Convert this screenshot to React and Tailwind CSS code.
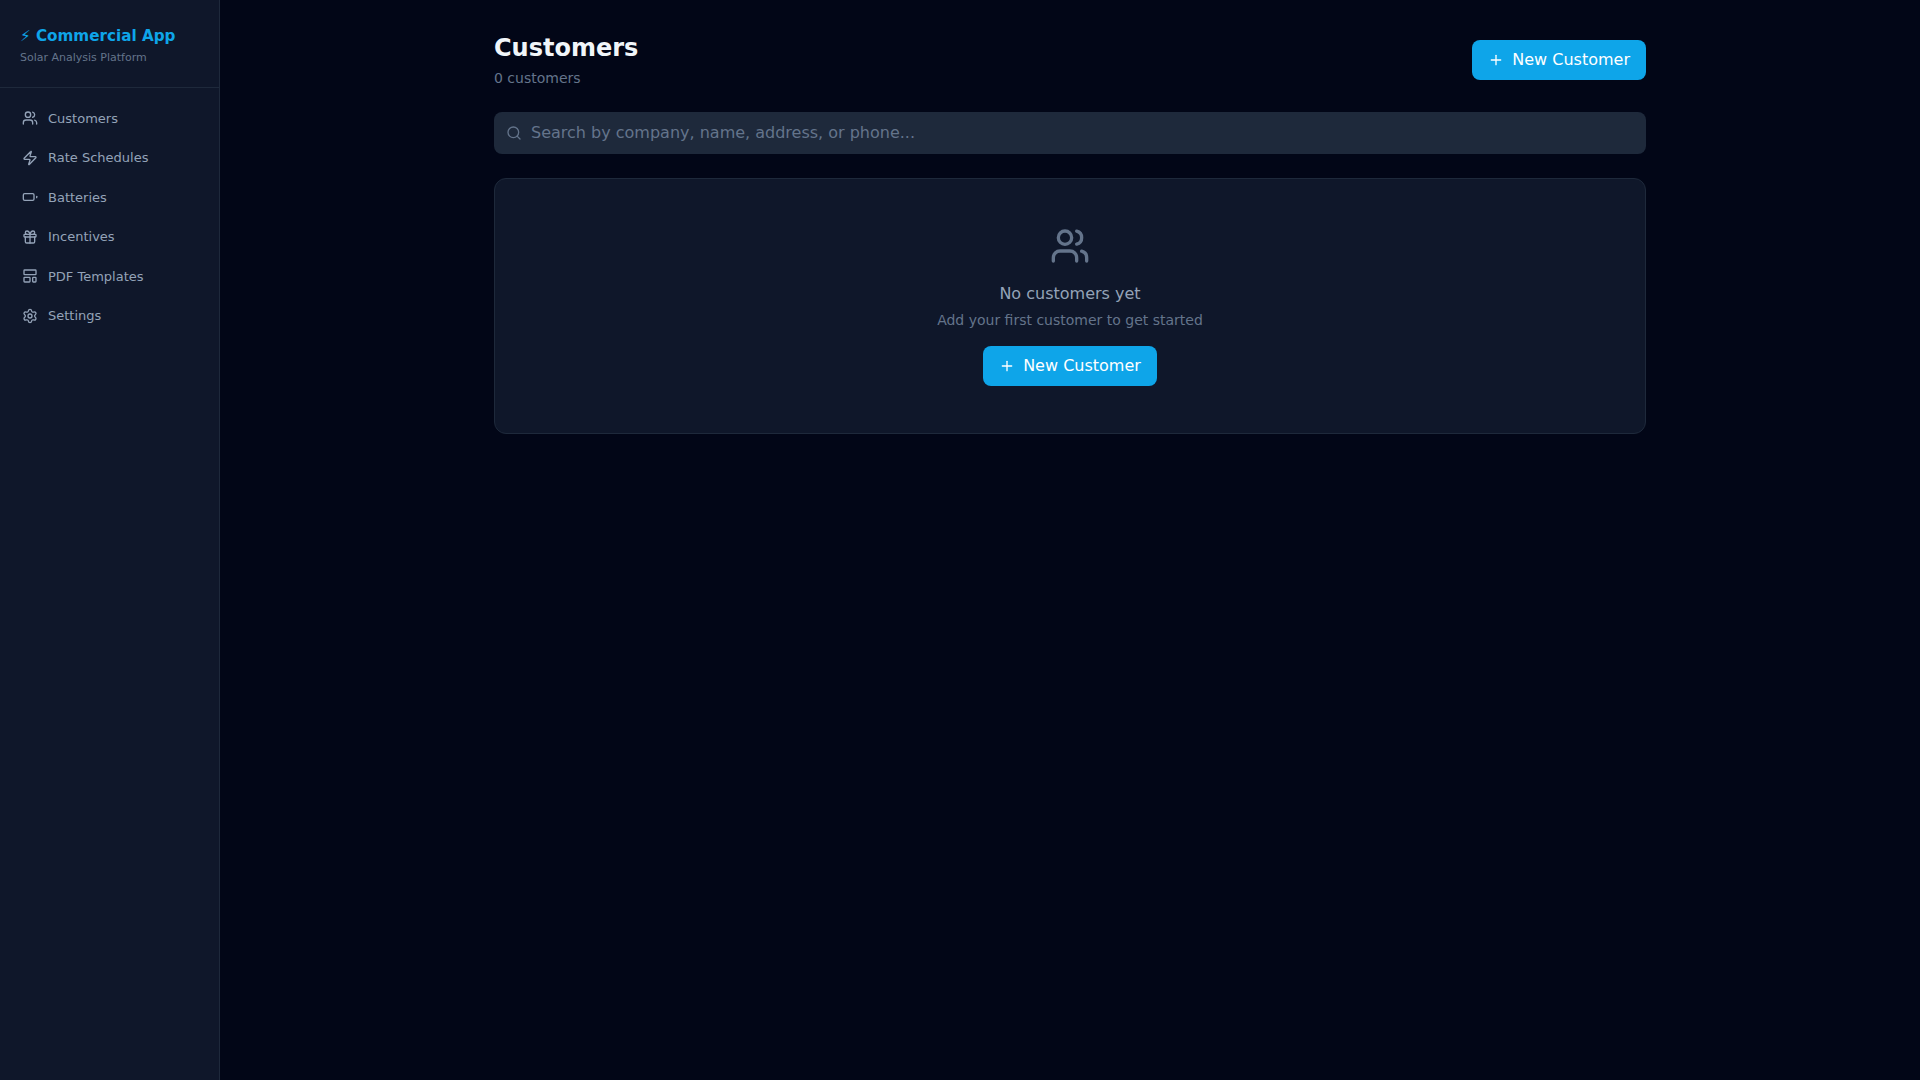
import { Users, Zap, Gift, LayoutTemplate, Settings, Search, Plus } from 'lucide-react'

// lucide's current Battery has a longer terminal than the one in the design
function BatteryIcon() {
  return (
    <svg width="16" height="16" viewBox="0 0 24 24" fill="none" stroke="currentColor" strokeWidth="2" strokeLinecap="round" strokeLinejoin="round">
      <rect x="2" y="7" width="16" height="10" rx="2" ry="2" />
      <line x1="22" x2="22" y1="11" y2="13" />
    </svg>
  )
}

const navItems = [
  { label: 'Customers', icon: Users },
  { label: 'Rate Schedules', icon: Zap },
  { label: 'Batteries', icon: BatteryIcon },
  { label: 'Incentives', icon: Gift },
  { label: 'PDF Templates', icon: LayoutTemplate },
  { label: 'Settings', icon: Settings },
]

function NewCustomerButton() {
  return (
    <button className="flex items-center gap-2 h-10 px-4 rounded-lg bg-[#0ea5e9] text-white text-base">
      <Plus size={16} />
      New Customer
    </button>
  )
}

export default function App() {
  return (
    <div className="flex h-screen overflow-hidden bg-[#020617] font-['DejaVu_Sans',sans-serif]">
      {/* Sidebar */}
      <aside className="w-[220px] flex-shrink-0 bg-[#0f172a] border-r border-[#1e293b]">
        <div className="h-[88px] px-5 pt-6 border-b border-[#1e293b]">
          <h1 className="text-[15.2px] leading-6 font-bold text-[#0ea5e9]">⚡ Commercial App</h1>
          <p className="mt-0.5 text-[11px] text-[#64748b]">Solar Analysis Platform</p>
        </div>
        <nav className="px-2.5 pt-[10.5px]">
          {navItems.map(({ label, icon: Icon }) => (
            <a key={label} href="#" className="flex items-center gap-2.5 px-3 py-2.5 rounded-md text-[13px] text-[#94a3b8]">
              <Icon size={16} />
              {label}
            </a>
          ))}
        </nav>
      </aside>

      {/* Main */}
      <main className="flex-1 overflow-auto p-8">
        <div className="max-w-6xl mx-auto">
          <div className="flex items-center justify-between mb-6">
            <div>
              <h2 className="text-2xl leading-[33px] font-bold text-[#f1f5f9]">Customers</h2>
              <p className="mt-[3px] text-sm text-[#64748b]">0 customers</p>
            </div>
            <NewCustomerButton />
          </div>

          <div className="relative mb-6">
            <Search size={16} className="absolute left-3 top-[13px] text-[#64748b]" />
            <input
              type="text"
              placeholder="Search by company, name, address, or phone..."
              className="w-full h-[42px] pl-[37px] pr-3 pb-0.5 rounded-lg bg-[#1e293b] text-base text-[#f1f5f9] placeholder:text-[#64748b] outline-none"
            />
          </div>

          <div className="flex flex-col items-center px-12 py-[47px] rounded-xl bg-[#0f172a] border border-[#1e293b]">
            <Users size={40} className="mb-4 text-[#64748b]" />
            <p className="mb-1 text-base leading-6 text-[#94a3b8]">No customers yet</p>
            <p className="mb-4 text-sm leading-5 text-[#64748b]">Add your first customer to get started</p>
            <NewCustomerButton />
          </div>
        </div>
      </main>
    </div>
  )
}
